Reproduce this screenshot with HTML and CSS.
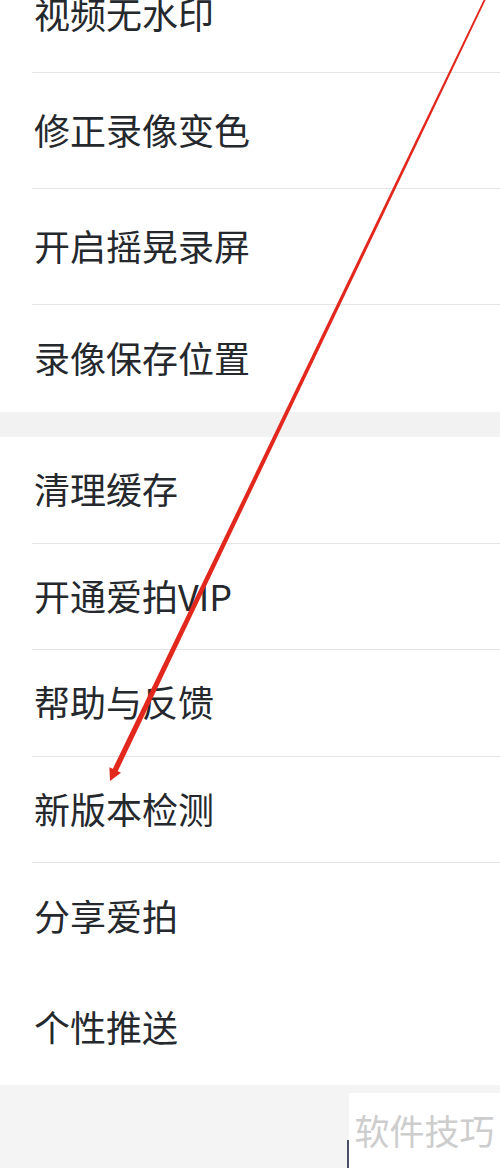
FILE: index.html
```html
<!DOCTYPE html>
<html lang="zh-CN">
<head>
<meta charset="utf-8">
<title>设置</title>
<link rel="stylesheet" href="styles.css">
</head>
<body>
<div class="screen">
  <ul class="group group-a">
    <li class="row">视频无水印</li>
    <li class="row">修正录像变色</li>
    <li class="row">开启摇晃录屏</li>
    <li class="row last">录像保存位置</li>
  </ul>
  <div class="gap"></div>
  <ul class="group group-b">
    <li class="row">清理缓存</li>
    <li class="row">开通爱拍VIP</li>
    <li class="row">帮助与反馈</li>
    <li class="row">新版本检测</li>
    <li class="row nosep">分享爱拍</li>
    <li class="row last">个性推送</li>
  </ul>
  <footer class="footer">
    <div class="watermark">软件技巧</div>
  </footer>
  <svg class="arrow" width="500" height="1168" viewBox="0 0 500 1168" xmlns="http://www.w3.org/2000/svg">
    <polygon points="487.8,-4.6 486.2,-5.4 112.6,769.3 117.5,771.7" fill="#e2271d"/>
    <polygon points="110,781 109.4,767.2 121,772.8" fill="#e2271d"/>
  </svg>
</div>
</body>
</html>
```

FILE: styles.css
```css
html, body {
  margin: 0;
  padding: 0;
  background: #ffffff;
}

.screen {
  position: relative;
  width: 500px;
  height: 1168px;
  overflow: hidden;
  background: #ffffff;
  font-family: "Noto Sans CJK SC", "Noto Sans", sans-serif;
}

.group {
  list-style: none;
  margin: 0;
  padding: 0;
}

.group-a {
  margin-top: -43px;
}

.row {
  box-sizing: border-box;
  display: flex;
  align-items: center;
  margin-left: 32px;
  padding-left: 2px;
  padding-bottom: 3px;
  border-bottom: 1px solid #e4e4e4;
  font-size: 36px;
  line-height: 36px;
  color: #25282d;
}

.group-a .row {
  height: 116px;
}

.group-a .row.last {
  height: 107px;
  border-bottom: none;
}

.group-b .row {
  height: 106.5px;
}

.group-b .row.nosep {
  height: 107px;
  border-bottom: none;
}

.group-b .row.last {
  height: 115px;
  border-bottom: none;
}

.gap {
  height: 25px;
  background: #f2f2f2;
}

.footer {
  box-sizing: border-box;
  height: 83px;
  padding-top: 8px;
  background: #f4f4f4;
  display: flex;
  justify-content: flex-end;
}

.watermark {
  position: relative;
  box-sizing: border-box;
  width: 151px;
  height: 75px;
  background: #ffffff;
  display: flex;
  align-items: center;
  justify-content: center;
  padding-bottom: 3px;
  font-size: 35px;
  line-height: 35px;
  color: #cdcdcd;
}

.watermark::before {
  content: "";
  position: absolute;
  left: -2px;
  top: 47px;
  bottom: 0;
  width: 2px;
  background: #4b5068;
}

.arrow {
  position: absolute;
  left: 0;
  top: 0;
  pointer-events: none;
}
```
